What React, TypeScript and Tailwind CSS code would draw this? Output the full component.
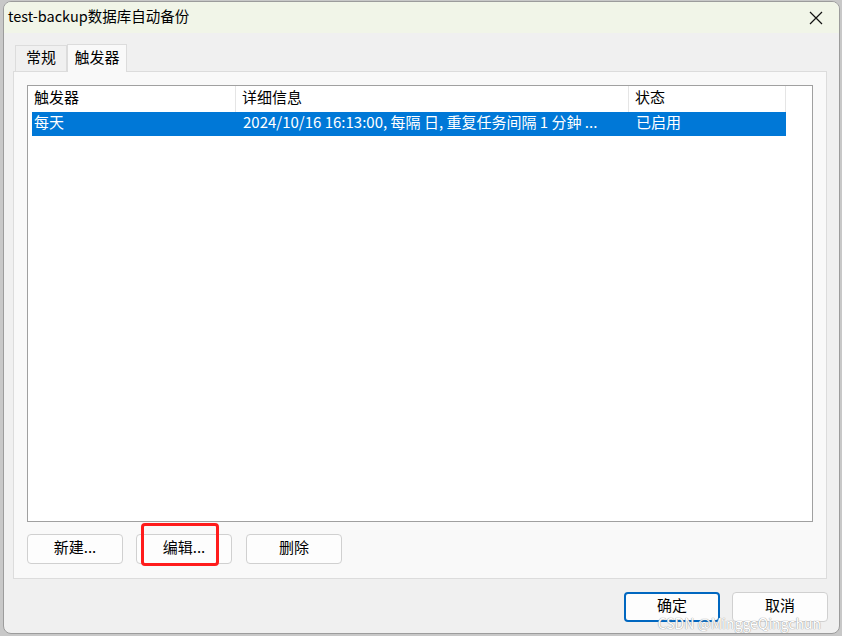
import React from 'react';

const font = { fontFamily: '"Noto Sans CJK SC", "Noto Sans", sans-serif' };

const columns = [
  { title: '触发器', w: 'w-[208px]' },
  { title: '详细信息', w: 'w-[393px]' },
  { title: '状态', w: 'w-[157px]' },
];

const Btn: React.FC<{ label: string; primary?: boolean; className?: string }> = ({ label, primary, className }) => (
  <button
    className={`w-[96px] h-[30px] rounded-[4px] bg-[#fdfdfd] text-[15px] text-black flex items-center justify-center pb-[3px] ${
      primary ? 'border-2 border-[#0067c0]' : 'border border-[#d0d0d0]'
    } ${className ?? ''}`}
  >
    {label}
  </button>
);

export default function App() {
  return (
    <div className="w-[842px] h-[636px] bg-[#c8c8c8] overflow-hidden pl-[3px] pt-[1px]" style={font}>
      <div className="w-[837px] h-[633px] bg-[#f0f0f0] border border-[#9c9c9c] rounded-[8px] overflow-hidden flex flex-col relative">
        {/* title bar */}
        <div className="h-[31px] bg-[#f1f5e8] flex items-center justify-between pl-[4px] pr-[14px] shrink-0">
          <span className="text-[14.5px] text-black leading-none pb-[2px]">test-backup数据库自动备份</span>
          <svg width="14" height="14" viewBox="0 0 14 14" className="mr-[2px]">
            <path d="M1 1 L13 13 M13 1 L1 13" stroke="#111" strokeWidth="1.2" />
          </svg>
        </div>

        {/* tabs */}
        <div className="flex items-end pl-[11px] pt-[9px] h-[38px] shrink-0">
          <div className="w-[52px] h-[26px] border border-b-0 border-[#dcdcdc] bg-[#f0f0f0] flex items-center justify-center text-[15px] text-black pb-[3px]">
            常规
          </div>
          <div className="w-[60px] h-[28px] border border-b-0 border-[#dcdcdc] bg-[#f9f9f9] flex items-center justify-center text-[15px] text-black pb-[3px] -mb-[1px] relative z-10">
            触发器
          </div>
        </div>

        {/* panel */}
        <div className="ml-[9px] w-[814px] h-[508px] border border-[#dcdcdc] bg-[#f9f9f9] flex flex-col px-[13px] pt-[13px]">
          <div className="w-[786px] h-[437px] border border-[#a0a0a0] bg-white flex flex-col">
            <div className="flex h-[26px] shrink-0">
              {columns.map(c => (
                <div key={c.title} className={`${c.w} h-full border-r border-[#e5e5e5] flex items-center pl-[6px] pb-[3px] text-[15px] text-black`}>
                  {c.title}
                </div>
              ))}
            </div>
            <div className="ml-[4px] w-[754px] h-[24px] bg-[#0078d7] flex items-center pb-[3px] text-[15px] text-white">
              <div className="w-[204px] pl-[2px]">每天</div>
              <div className="w-[393px] pl-[7px] whitespace-nowrap">2024/10/16 16:13:00, 每隔 日, 重复任务间隔 1 分鈡 ...</div>
              <div className="w-[157px] pl-[7px]">已启用</div>
            </div>
          </div>

          <div className="flex gap-[13px] mt-[12px] relative">
            <Btn label="新建..." />
            <Btn label="编辑..." />
            <Btn label="删除" className="ml-[1px]" />
            <div className="absolute left-[114px] -top-[11px] w-[78px] h-[43px] border-[3px] border-[#ff1c1c] rounded-[4px]" />
          </div>
        </div>

        {/* footer */}
        <div className="flex justify-end gap-[12px] pr-[11px] mt-[13px]">
          <Btn label="确定" primary />
          <Btn label="取消" />
        </div>

        <div
          className="absolute right-[18px] bottom-[3px] text-[14px] text-white leading-none"
          style={{ textShadow: '0 0 1px #9a9a9a, 0 0 1px #9a9a9a' }}
        >
          CSDN @MinggeQingchun
        </div>
      </div>
    </div>
  );
}
